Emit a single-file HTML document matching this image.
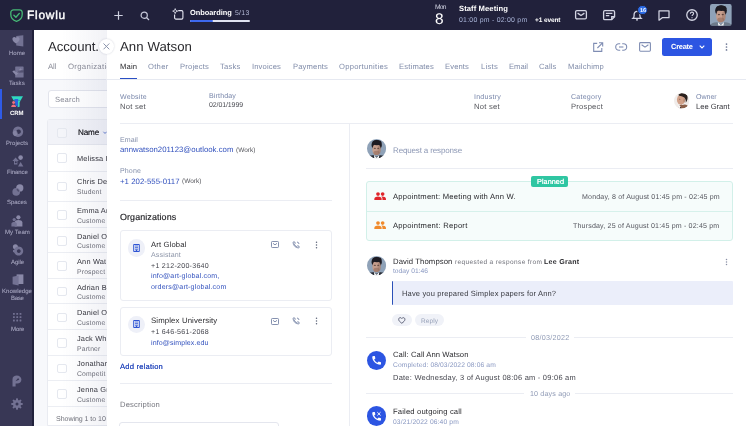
<!DOCTYPE html>
<html><head><meta charset="utf-8"><title>Flowlu CRM</title>
<style>
html,body{margin:0;padding:0;}
body{width:746px;height:426px;overflow:hidden;position:relative;background:#fff;font-family:"Liberation Sans",sans-serif;}
.t{position:absolute;white-space:nowrap;will-change:transform;text-rendering:geometricPrecision;}
.b{position:absolute;box-sizing:border-box;}
svg{position:absolute;overflow:visible;}
</style></head><body>
<div class="b" style="left:34.00px;top:29.00px;width:712.00px;height:397.00px;background:#f7f8fb;"></div>
<div class="b" style="left:34.00px;top:29.00px;width:80.00px;height:50.00px;background:#fff;"></div>
<div class="b" style="left:34.00px;top:78.50px;width:80.00px;height:1.00px;background:#e6e8f0;"></div>
<div class="t" style="left:48.20px;top:39px;font-size:13.21px;line-height:15px;color:#2a2a2e;letter-spacing:-0.048px;">Account.</div>
<div class="t" style="left:48.20px;top:62px;font-size:7.81px;line-height:9px;color:#8b8d99;letter-spacing:-0.161px;">All</div>
<div class="t" style="left:68.30px;top:62px;font-size:7.81px;line-height:9px;color:#8b8d99;letter-spacing:0.292px;">Organizations</div>
<div class="b" style="left:48.00px;top:90.40px;width:80.00px;height:17.20px;background:#fff;border:1px solid #e2e4ec;border-radius:3px;"></div>
<div class="t" style="left:55.00px;top:95px;font-size:7.63px;line-height:9px;color:#8b8d99;letter-spacing:0.139px;">Search</div>
<div class="b" style="left:47.00px;top:119.40px;width:80.00px;height:306.60px;background:#fff;border-radius:3px 0 0 0;border:1px solid #e9ebf1;"></div>
<div class="b" style="left:48.00px;top:120.10px;width:80.00px;height:25.00px;background:#f2f3f8;border-bottom:1px solid #e6e8ef;"></div>
<div class="b" style="left:57.20px;top:128.00px;width:9.60px;height:9.60px;background:#f4f5f9;border:1px solid #e5e8ef;border-radius:2px;"></div>
<div class="t" style="left:77.80px;top:128px;font-size:8.18px;line-height:9px;color:#2d2d33;letter-spacing:-0.208px;text-shadow:0 0 .2px #555;">Name</div>
<svg style="left:103.4px;top:131.2px" width="4" height="3.4" viewBox="0 0 5 4"><path d="M0.5 0.8 L2.5 3 L4.5 0.8" fill="none" stroke="#5873c9" stroke-width="1.1"/></svg>
<div class="b" style="left:48.00px;top:170.50px;width:80.00px;height:1.00px;background:#eceef3;"></div>
<div class="b" style="left:48.00px;top:201.30px;width:80.00px;height:1.00px;background:#eceef3;"></div>
<div class="b" style="left:48.00px;top:226.50px;width:80.00px;height:1.00px;background:#eceef3;"></div>
<div class="b" style="left:48.00px;top:252.20px;width:80.00px;height:1.00px;background:#eceef3;"></div>
<div class="b" style="left:48.00px;top:277.80px;width:80.00px;height:1.00px;background:#eceef3;"></div>
<div class="b" style="left:48.00px;top:303.30px;width:80.00px;height:1.00px;background:#eceef3;"></div>
<div class="b" style="left:48.00px;top:328.50px;width:80.00px;height:1.00px;background:#eceef3;"></div>
<div class="b" style="left:48.00px;top:354.50px;width:80.00px;height:1.00px;background:#eceef3;"></div>
<div class="b" style="left:48.00px;top:380.00px;width:80.00px;height:1.00px;background:#eceef3;"></div>
<div class="b" style="left:48.00px;top:405.50px;width:80.00px;height:1.00px;background:#eceef3;"></div>
<div class="t" style="left:76.80px;top:154px;font-size:7.35px;line-height:9px;color:#33333a;letter-spacing:.2px;">Melissa I</div>
<div class="b" style="left:57.20px;top:153.40px;width:9.60px;height:9.60px;background:#fff;border:1px solid #e5e8ef;border-radius:2px;"></div>
<div class="t" style="left:76.80px;top:177px;font-size:7.35px;line-height:9px;color:#33333a;letter-spacing:.2px;">Chris De</div>
<div class="t" style="left:76.80px;top:189px;font-size:6.79px;line-height:7px;color:#6f7079;letter-spacing:.18px;">Student</div>
<div class="b" style="left:57.20px;top:181.65px;width:9.60px;height:9.60px;background:#fff;border:1px solid #e5e8ef;border-radius:2px;"></div>
<div class="t" style="left:76.80px;top:206px;font-size:7.35px;line-height:9px;color:#33333a;letter-spacing:.2px;">Emma Ar</div>
<div class="t" style="left:76.80px;top:218px;font-size:6.79px;line-height:7px;color:#6f7079;letter-spacing:.18px;">Custome</div>
<div class="b" style="left:57.20px;top:210.30px;width:9.60px;height:9.60px;background:#fff;border:1px solid #e5e8ef;border-radius:2px;"></div>
<div class="t" style="left:76.80px;top:232px;font-size:7.35px;line-height:9px;color:#33333a;letter-spacing:.2px;">Daniel O</div>
<div class="t" style="left:76.80px;top:243px;font-size:6.79px;line-height:7px;color:#6f7079;letter-spacing:.18px;">Custome</div>
<div class="b" style="left:57.20px;top:235.95px;width:9.60px;height:9.60px;background:#fff;border:1px solid #e5e8ef;border-radius:2px;"></div>
<div class="t" style="left:76.80px;top:257px;font-size:7.35px;line-height:9px;color:#33333a;letter-spacing:.2px;">Ann Wat</div>
<div class="t" style="left:76.80px;top:269px;font-size:6.79px;line-height:7px;color:#6f7079;letter-spacing:.18px;">Prospect</div>
<div class="b" style="left:57.20px;top:261.45px;width:9.60px;height:9.60px;background:#fff;border:1px solid #e5e8ef;border-radius:2px;"></div>
<div class="t" style="left:76.80px;top:283px;font-size:7.35px;line-height:9px;color:#33333a;letter-spacing:.2px;">Adrian B</div>
<div class="t" style="left:76.80px;top:294px;font-size:6.79px;line-height:7px;color:#6f7079;letter-spacing:.18px;">Custome</div>
<div class="b" style="left:57.20px;top:286.90px;width:9.60px;height:9.60px;background:#fff;border:1px solid #e5e8ef;border-radius:2px;"></div>
<div class="t" style="left:76.80px;top:308px;font-size:7.35px;line-height:9px;color:#33333a;letter-spacing:.2px;">Daniel O</div>
<div class="t" style="left:76.80px;top:320px;font-size:6.79px;line-height:7px;color:#6f7079;letter-spacing:.18px;">Custome</div>
<div class="b" style="left:57.20px;top:312.65px;width:9.60px;height:9.60px;background:#fff;border:1px solid #e5e8ef;border-radius:2px;"></div>
<div class="t" style="left:76.80px;top:334px;font-size:7.35px;line-height:9px;color:#33333a;letter-spacing:.2px;">Jack Wh</div>
<div class="t" style="left:76.80px;top:346px;font-size:6.79px;line-height:7px;color:#6f7079;letter-spacing:.18px;">Partner</div>
<div class="b" style="left:57.20px;top:338.10px;width:9.60px;height:9.60px;background:#fff;border:1px solid #e5e8ef;border-radius:2px;"></div>
<div class="t" style="left:76.80px;top:359px;font-size:7.35px;line-height:9px;color:#33333a;letter-spacing:.2px;">Jonathan</div>
<div class="t" style="left:76.80px;top:371px;font-size:6.79px;line-height:7px;color:#6f7079;letter-spacing:.18px;">Competit</div>
<div class="b" style="left:57.20px;top:363.70px;width:9.60px;height:9.60px;background:#fff;border:1px solid #e5e8ef;border-radius:2px;"></div>
<div class="t" style="left:76.80px;top:385px;font-size:7.35px;line-height:9px;color:#33333a;letter-spacing:.2px;">Jenna Gr</div>
<div class="t" style="left:76.80px;top:397px;font-size:6.79px;line-height:7px;color:#6f7079;letter-spacing:.18px;">Custome</div>
<div class="b" style="left:57.20px;top:389.10px;width:9.60px;height:9.60px;background:#fff;border:1px solid #e5e8ef;border-radius:2px;"></div>
<div class="t" style="left:56.00px;top:416px;font-size:7.07px;line-height:7px;color:#6f7079;letter-spacing:-0.059px;">Showing 1 to 10</div>
<div class="b" style="left:62.00px;top:29.00px;width:45.00px;height:397.00px;background:linear-gradient(to right,rgba(50,60,120,0),rgba(50,60,120,0.03) 50%,rgba(50,60,120,0.065));"></div>
<div class="b" style="left:106.70px;top:29.00px;width:640.00px;height:397.00px;background:#fff;"></div>
<div class="b" style="left:99.20px;top:38.80px;width:15.00px;height:15.00px;background:#fff;border-radius:50%;box-shadow:0 0 2px rgba(40,50,90,.22);"></div>
<svg style="left:103.3px;top:43px" width="6.8" height="6.8" viewBox="0 0 6.8 6.8"><path d="M0.5 0.5 L6.3 6.3 M6.3 0.5 L0.5 6.3" stroke="#8b94ab" stroke-width="1" fill="none"/></svg>
<div class="t" style="left:119.70px;top:39px;font-size:13.21px;line-height:15px;color:#2a2a2e;letter-spacing:0.055px;">Ann Watson</div>
<div class="t" style="left:119.70px;top:62px;font-size:7.63px;line-height:9px;color:#2a2a2e;letter-spacing:0.168px;">Main</div>
<div class="t" style="left:147.80px;top:62px;font-size:7.63px;line-height:9px;color:#808ca9;letter-spacing:0.285px;">Other</div>
<div class="t" style="left:179.60px;top:62px;font-size:7.63px;line-height:9px;color:#808ca9;letter-spacing:0.181px;">Projects</div>
<div class="t" style="left:220.20px;top:62px;font-size:7.63px;line-height:9px;color:#808ca9;letter-spacing:0.201px;">Tasks</div>
<div class="t" style="left:252.00px;top:62px;font-size:7.63px;line-height:9px;color:#808ca9;letter-spacing:0.128px;">Invoices</div>
<div class="t" style="left:292.60px;top:62px;font-size:7.63px;line-height:9px;color:#808ca9;letter-spacing:0.136px;">Payments</div>
<div class="t" style="left:338.80px;top:62px;font-size:7.63px;line-height:9px;color:#808ca9;letter-spacing:0.280px;">Opportunities</div>
<div class="t" style="left:399.00px;top:62px;font-size:7.63px;line-height:9px;color:#808ca9;letter-spacing:0.169px;">Estimates</div>
<div class="t" style="left:445.00px;top:62px;font-size:7.63px;line-height:9px;color:#808ca9;letter-spacing:0.114px;">Events</div>
<div class="t" style="left:480.70px;top:62px;font-size:7.63px;line-height:9px;color:#808ca9;letter-spacing:0.264px;">Lists</div>
<div class="t" style="left:508.70px;top:62px;font-size:7.63px;line-height:9px;color:#808ca9;letter-spacing:-0.014px;">Email</div>
<div class="t" style="left:539.00px;top:62px;font-size:7.63px;line-height:9px;color:#808ca9;letter-spacing:0.110px;">Calls</div>
<div class="t" style="left:568.00px;top:62px;font-size:7.63px;line-height:9px;color:#808ca9;letter-spacing:0.186px;">Mailchimp</div>
<div class="b" style="left:106.40px;top:78.60px;width:640.00px;height:1.00px;background:#e6e9f1;"></div>
<div class="b" style="left:119.70px;top:77.60px;width:17.20px;height:1.60px;background:#2a4fc4;"></div>
<svg style="left:592.8px;top:42.2px" width="10.4" height="10" viewBox="0 0 10.4 10" fill="none" stroke="#7f8db3" stroke-width="1.1"><path d="M4.2 1.4 H0.7 V9.4 H8.8 V6"/><path d="M6 0.7 H9.7 V4.4 M9.6 0.8 L4.4 6"/></svg>
<svg style="left:614.8px;top:43.2px" width="12.4" height="8" viewBox="0 0 12.4 8" fill="none" stroke="#7f8db3" stroke-width="1.1"><path d="M5.2 0.8 H3.9 A3.2 3.2 0 0 0 3.9 7.2 H5.2"/><path d="M7.2 0.8 H8.5 A3.2 3.2 0 0 1 8.5 7.2 H7.2"/><path d="M4 4 H8.4"/></svg>
<svg style="left:639px;top:42.3px" width="12" height="9.8" viewBox="0 0 12 9.8" fill="none" stroke="#7f8db3" stroke-width="1.1"><rect x="0.6" y="0.6" width="10.8" height="8.6" rx="0.9"/><path d="M2.6 2.8 L6 5.2 L9.4 2.8"/></svg>
<div class="b" style="left:662.10px;top:37.80px;width:50.00px;height:17.90px;background:#2c55e2;border-radius:2.5px;"></div>
<div class="t" style="left:671.00px;top:42px;font-size:7.44px;line-height:9px;color:#fff;letter-spacing:-0.243px;font-weight:bold;">Create</div>
<svg style="left:698.6px;top:45.4px" width="6" height="4" viewBox="0 0 6 4"><path d="M0.7 0.7 L3 3 L5.3 0.7" fill="none" stroke="#fff" stroke-width="1.1"/></svg>
<svg style="left:725.10px;top:42.00px" width="3" height="10" viewBox="-1.5 -5 3 10" fill="#6f7a96"><circle cx="0" cy="-2.90" r="0.85"/><circle cx="0" cy="0" r="0.85"/><circle cx="0" cy="2.90" r="0.85"/></svg>
<div class="t" style="left:119.70px;top:94px;font-size:7.07px;line-height:7px;color:#7886aa;letter-spacing:0.228px;">Website</div>
<div class="t" style="left:119.70px;top:102px;font-size:7.63px;line-height:9px;color:#55565c;letter-spacing:0.263px;">Not set</div>
<div class="t" style="left:208.60px;top:93px;font-size:7.07px;line-height:7px;color:#7886aa;letter-spacing:0.134px;">Birthday</div>
<div class="t" style="left:208.60px;top:102px;font-size:6.98px;line-height:7px;color:#4c4d54;letter-spacing:-0.091px;">02/01/1999</div>
<div class="t" style="left:473.50px;top:94px;font-size:7.07px;line-height:7px;color:#7886aa;letter-spacing:0.232px;">Industry</div>
<div class="t" style="left:473.50px;top:102px;font-size:7.63px;line-height:9px;color:#55565c;letter-spacing:0.263px;">Not set</div>
<div class="t" style="left:571.00px;top:94px;font-size:7.07px;line-height:7px;color:#7886aa;letter-spacing:0.227px;">Category</div>
<div class="t" style="left:571.00px;top:102px;font-size:7.63px;line-height:9px;color:#55565c;letter-spacing:0.238px;">Prospect</div>
<svg style="left:674.40px;top:93.30px" width="15.40" height="15.40" viewBox="0 0 20 20"><defs><clipPath id="av1"><circle cx="10" cy="10" r="10"/></clipPath></defs><g clip-path="url(#av1)"><rect width="20" height="20" fill="#f0ecea"/><ellipse cx="9" cy="8.8" rx="5.2" ry="6.6" fill="#d1a189"/><path d="M5.6 2.6 C7.6 -0.6 16 -0.6 17.4 4 C18.2 7.4 17 11 15.2 12.6 C15.6 9 14.6 6.2 11.6 4.8 C9.4 4 7.2 4 5.6 2.6 Z" fill="#2b211d"/><ellipse cx="13.3" cy="9.8" rx="1.2" ry="2.8" fill="#a87a64" opacity=".6"/><ellipse cx="7.4" cy="8" rx="1" ry=".5" fill="#3a2824" opacity=".7"/><path d="M4.6 20 C5.6 16.2 8.8 14.8 11 15.6 C14 13.8 19 15.6 20 20 Z" fill="#8a5f49"/><path d="M6 15.2 L8.8 18 L7.6 20 H4.6 Z" fill="#fafafa"/><path d="M8.2 17.4 L9.6 20 H7.4 Z" fill="#2a2326"/></g></svg>
<div class="t" style="left:695.80px;top:94px;font-size:7.07px;line-height:7px;color:#7886aa;letter-spacing:-0.044px;">Owner</div>
<div class="t" style="left:695.80px;top:102px;font-size:7.63px;line-height:9px;color:#3a3a40;letter-spacing:-0.046px;">Lee Grant</div>
<div class="b" style="left:119.70px;top:123.00px;width:613.50px;height:1.00px;background:#ebedf3;"></div>
<div class="b" style="left:349.00px;top:123.50px;width:1.00px;height:303.00px;background:#ebedf3;"></div>
<div class="t" style="left:119.90px;top:137px;font-size:7.07px;line-height:7px;color:#8590ab;letter-spacing:0.065px;">Email</div>
<div class="t" style="left:119.90px;top:145px;font-size:7.81px;line-height:9px;color:#3352be;letter-spacing:0.014px;">annwatson201123@outlook.com</div>
<div class="t" style="left:235.60px;top:147px;font-size:6.51px;line-height:7px;color:#55565c;letter-spacing:0.016px;">(Work)</div>
<div class="t" style="left:119.90px;top:168px;font-size:7.07px;line-height:7px;color:#8590ab;letter-spacing:0.112px;">Phone</div>
<div class="t" style="left:119.90px;top:177px;font-size:7.81px;line-height:9px;color:#3352be;letter-spacing:0.037px;">+1 202-555-0117</div>
<div class="t" style="left:181.80px;top:178px;font-size:6.51px;line-height:7px;color:#55565c;letter-spacing:0.016px;">(Work)</div>
<div class="b" style="left:119.70px;top:199.80px;width:211.90px;height:1.00px;background:#ebedf3;"></div>
<div class="t" style="left:119.90px;top:212px;font-size:8.93px;line-height:10px;color:#222226;letter-spacing:0.093px;-webkit-text-stroke:.15px #222226;">Organizations</div>
<div class="b" style="left:119.70px;top:229.60px;width:211.90px;height:71.00px;border:1px solid #ebedf3;border-radius:3px;background:#fff;"></div>
<div class="b" style="left:128.30px;top:239.40px;width:17.20px;height:17.20px;background:#eef0f8;border-radius:50%;"></div>
<svg style="left:133.40px;top:244.00px" width="7" height="8" viewBox="0 0 7 8"><path d="M0.7 0.5 H6.3 V7.5 H0.7 Z" fill="none" stroke="#2f55d4" stroke-width="1"/><path d="M2 2 H5 M2 3.6 H5 M2 5.2 H5" stroke="#2f55d4" stroke-width="0.8"/><rect x="2.7" y="5.6" width="1.6" height="1.9" fill="#2f55d4"/></svg>
<div class="t" style="left:150.70px;top:240px;font-size:7.63px;line-height:9px;color:#2a2a2e;letter-spacing:0.159px;">Art Global</div>
<div class="t" style="left:150.70px;top:252px;font-size:7.07px;line-height:7px;color:#8d95a8;letter-spacing:0.147px;">Assistant</div>
<div class="t" style="left:150.70px;top:263px;font-size:7.07px;line-height:7px;color:#44454d;letter-spacing:0.264px;">+1 212-200-3640</div>
<div class="t" style="left:150.70px;top:273px;font-size:7.07px;line-height:7px;color:#3352be;letter-spacing:0.159px;">info@art-global.com,</div>
<div class="t" style="left:150.70px;top:284px;font-size:7.07px;line-height:7px;color:#3352be;letter-spacing:0.167px;">orders@art-global.com</div>
<svg style="left:271px;top:241.10px" width="8" height="7" viewBox="0 0 8 7" fill="none" stroke="#6f7da0" stroke-width="0.85"><rect x="0.5" y="0.5" width="7" height="6" rx="0.8"/><path d="M2 2.3 L4 3.9 L6 2.3"/></svg>
<svg style="left:292.3px;top:240.60px" width="8" height="8" viewBox="0 0 8 8" fill="none" stroke="#6f7da0" stroke-width="0.85"><path d="M1 1.2 C1 1 2.6 0.6 2.8 1 L3.2 2.6 L2.4 3.3 C2.8 4.4 3.6 5.2 4.7 5.6 L5.4 4.8 L7 5.2 C7.4 5.4 7 7 6.8 7 C3.6 7 1 4.4 1 1.2 Z"/><path d="M5 1 A2.2 2.2 0 0 1 7 3" /></svg>
<svg style="left:315.10px;top:239.60px" width="3" height="10" viewBox="-1.5 -5 3 10" fill="#5c6478"><circle cx="0" cy="-2.70" r="0.75"/><circle cx="0" cy="0" r="0.75"/><circle cx="0" cy="2.70" r="0.75"/></svg>
<div class="b" style="left:119.70px;top:306.50px;width:211.90px;height:49.60px;border:1px solid #ebedf3;border-radius:3px;background:#fff;"></div>
<div class="b" style="left:128.30px;top:315.80px;width:17.20px;height:17.20px;background:#eef0f8;border-radius:50%;"></div>
<svg style="left:133.40px;top:320.40px" width="7" height="8" viewBox="0 0 7 8"><path d="M0.7 0.5 H6.3 V7.5 H0.7 Z" fill="none" stroke="#2f55d4" stroke-width="1"/><path d="M2 2 H5 M2 3.6 H5 M2 5.2 H5" stroke="#2f55d4" stroke-width="0.8"/><rect x="2.7" y="5.6" width="1.6" height="1.9" fill="#2f55d4"/></svg>
<div class="t" style="left:150.70px;top:316px;font-size:7.81px;line-height:9px;color:#2a2a2e;letter-spacing:0.125px;">Simplex University</div>
<div class="t" style="left:150.70px;top:329px;font-size:7.07px;line-height:7px;color:#44454d;letter-spacing:0.264px;">+1 646-561-2068</div>
<div class="t" style="left:150.70px;top:340px;font-size:7.07px;line-height:7px;color:#3352be;letter-spacing:0.076px;">info@simplex.edu</div>
<svg style="left:271px;top:317.70px" width="8" height="7" viewBox="0 0 8 7" fill="none" stroke="#6f7da0" stroke-width="0.85"><rect x="0.5" y="0.5" width="7" height="6" rx="0.8"/><path d="M2 2.3 L4 3.9 L6 2.3"/></svg>
<svg style="left:292.3px;top:317.20px" width="8" height="8" viewBox="0 0 8 8" fill="none" stroke="#6f7da0" stroke-width="0.85"><path d="M1 1.2 C1 1 2.6 0.6 2.8 1 L3.2 2.6 L2.4 3.3 C2.8 4.4 3.6 5.2 4.7 5.6 L5.4 4.8 L7 5.2 C7.4 5.4 7 7 6.8 7 C3.6 7 1 4.4 1 1.2 Z"/><path d="M5 1 A2.2 2.2 0 0 1 7 3" /></svg>
<svg style="left:315.10px;top:316.20px" width="3" height="10" viewBox="-1.5 -5 3 10" fill="#5c6478"><circle cx="0" cy="-2.70" r="0.75"/><circle cx="0" cy="0" r="0.75"/><circle cx="0" cy="2.70" r="0.75"/></svg>
<div class="t" style="left:119.90px;top:362px;font-size:7.63px;line-height:9px;color:#3352be;letter-spacing:0.192px;text-shadow:0 0 .3px #2a4fc4;">Add relation</div>
<div class="b" style="left:119.70px;top:382.80px;width:211.90px;height:1.00px;background:#ebedf3;"></div>
<div class="t" style="left:119.90px;top:400px;font-size:7.63px;line-height:9px;color:#75767e;letter-spacing:0.169px;">Description</div>
<div class="b" style="left:119.00px;top:422.00px;width:159.60px;height:10.00px;border:1px solid #e4e6ee;border-radius:3px;"></div>
<svg style="left:366.70px;top:138.90px" width="19.20" height="19.20" viewBox="0 0 20 20"><defs><clipPath id="av2"><circle cx="10" cy="10" r="10"/></clipPath></defs><g clip-path="url(#av2)"><rect width="20" height="20" fill="#8fa2b8"/><ellipse cx="10.1" cy="6.3" rx="5.4" ry="5.2" fill="#1d1b22"/><ellipse cx="9.9" cy="11" rx="4.3" ry="6" fill="#c59d8c"/><ellipse cx="10.4" cy="3.9" rx="4.7" ry="2.5" fill="#1d1b22"/><ellipse cx="12.7" cy="11" rx="1.7" ry="4.4" fill="#8d6657" opacity=".4"/><ellipse cx="9.9" cy="14.5" rx="3.2" ry="2.2" fill="#8d6657" opacity=".55"/><ellipse cx="8.2" cy="9.7" rx="1.1" ry=".55" fill="#3a2824" opacity=".8"/><ellipse cx="11.7" cy="9.7" rx="1.1" ry=".55" fill="#3a2824" opacity=".8"/><path d="M0 20 C1 17.4 5 16.4 7.6 17 L10 18.4 L12.4 17 C15 16.4 19 17.4 20 20 Z" fill="#2a2c34"/><path d="M7.2 16.5 L10 19.6 L12.8 16.5 L12.4 20 H7.6 Z" fill="#eef0f2"/></g></svg>
<div class="t" style="left:392.60px;top:146px;font-size:8.00px;line-height:9px;color:#8c97b4;letter-spacing:-0.144px;">Request a response</div>
<div class="b" style="left:366.40px;top:168.00px;width:366.40px;height:1.00px;background:#ebedf3;"></div>
<div class="b" style="left:366.40px;top:181.00px;width:366.60px;height:59.60px;background:#f6fcfb;border:1px solid #d2f0e9;border-radius:3px;"></div>
<div class="b" style="left:367.40px;top:210.60px;width:364.60px;height:1.00px;background:#d6f1eb;"></div>
<div class="b" style="left:531.40px;top:176.00px;width:37.00px;height:10.80px;background:#2fc6a2;border-radius:2px;"></div>
<div class="t" style="left:536.50px;top:177px;font-size:7.25px;line-height:9px;color:#fff;letter-spacing:0.054px;text-shadow:0 0 .3px #fff;">Planned</div>
<svg style="left:374.40px;top:192.00px" width="12.2" height="8.4" viewBox="0 0 11 8" preserveAspectRatio="none" fill="#e0252b"><circle cx="3.6" cy="2" r="1.7"/><circle cx="7.8" cy="2" r="1.7"/><path d="M0.3 7.6 V6.4 C0.3 5 2.4 4.3 3.6 4.3 C4.8 4.3 6.9 5 6.9 6.4 V7.6 Z"/><path d="M7.6 7.6 V6.4 C7.6 5.5 7.2 4.9 6.6 4.5 C8 4.1 10.8 4.8 10.8 6.4 V7.6 Z"/></svg>
<svg style="left:374.40px;top:221.40px" width="12.2" height="8.4" viewBox="0 0 11 8" preserveAspectRatio="none" fill="#f08a2c"><circle cx="3.6" cy="2" r="1.7"/><circle cx="7.8" cy="2" r="1.7"/><path d="M0.3 7.6 V6.4 C0.3 5 2.4 4.3 3.6 4.3 C4.8 4.3 6.9 5 6.9 6.4 V7.6 Z"/><path d="M7.6 7.6 V6.4 C7.6 5.5 7.2 4.9 6.6 4.5 C8 4.1 10.8 4.8 10.8 6.4 V7.6 Z"/></svg>
<div class="t" style="left:392.60px;top:192px;font-size:7.63px;line-height:9px;color:#2a2a2e;letter-spacing:0.208px;">Appointment: Meeting with Ann W.</div>
<div class="t" style="left:581.80px;top:194px;font-size:7.07px;line-height:7px;color:#55565e;letter-spacing:0.177px;">Monday, 8 of August 01:45 pm - 02:45 pm</div>
<div class="t" style="left:392.60px;top:221px;font-size:7.63px;line-height:9px;color:#2a2a2e;letter-spacing:0.240px;">Appointment: Report</div>
<div class="t" style="left:573.30px;top:223px;font-size:7.07px;line-height:7px;color:#55565e;letter-spacing:0.170px;">Thursday, 25 of August 01:45 pm - 02:45 pm</div>
<svg style="left:366.70px;top:255.60px" width="19.20" height="19.20" viewBox="0 0 20 20"><defs><clipPath id="av3"><circle cx="10" cy="10" r="10"/></clipPath></defs><g clip-path="url(#av3)"><rect width="20" height="20" fill="#8fa2b8"/><ellipse cx="10.1" cy="6.3" rx="5.4" ry="5.2" fill="#1d1b22"/><ellipse cx="9.9" cy="11" rx="4.3" ry="6" fill="#c59d8c"/><ellipse cx="10.4" cy="3.9" rx="4.7" ry="2.5" fill="#1d1b22"/><ellipse cx="12.7" cy="11" rx="1.7" ry="4.4" fill="#8d6657" opacity=".4"/><ellipse cx="9.9" cy="14.5" rx="3.2" ry="2.2" fill="#8d6657" opacity=".55"/><ellipse cx="8.2" cy="9.7" rx="1.1" ry=".55" fill="#3a2824" opacity=".8"/><ellipse cx="11.7" cy="9.7" rx="1.1" ry=".55" fill="#3a2824" opacity=".8"/><path d="M0 20 C1 17.4 5 16.4 7.6 17 L10 18.4 L12.4 17 C15 16.4 19 17.4 20 20 Z" fill="#2a2c34"/><path d="M7.2 16.5 L10 19.6 L12.8 16.5 L12.4 20 H7.6 Z" fill="#eef0f2"/></g></svg>
<div class="t" style="left:392.60px;top:257px;font-size:7.72px;line-height:9px;color:#2a2a2e;letter-spacing:0.092px;">David Thompson</div>
<div class="t" style="left:454.60px;top:259px;font-size:6.51px;line-height:7px;color:#6f7079;letter-spacing:0.388px;">requested a response from</div>
<div class="t" style="left:544.40px;top:259px;font-size:7.07px;line-height:7px;color:#2a2a2e;letter-spacing:0.278px;font-weight:bold;">Lee Grant</div>
<div class="t" style="left:392.60px;top:268px;font-size:6.70px;line-height:7px;color:#8796c0;letter-spacing:0.000px;">today 01:46</div>
<svg style="left:724.50px;top:257.20px" width="3" height="10" viewBox="-1.5 -5 3 10" fill="#8a90a6"><circle cx="0" cy="-2.60" r="0.75"/><circle cx="0" cy="0" r="0.75"/><circle cx="0" cy="2.60" r="0.75"/></svg>
<div class="b" style="left:391.60px;top:280.50px;width:341.40px;height:24.50px;background:#ebeefa;border-left:1.6px solid #2b50b8;border-radius:1px;"></div>
<div class="t" style="left:401.80px;top:289px;font-size:7.53px;line-height:9px;color:#3a3b42;letter-spacing:0.153px;">Have you prepared Simplex papers for Ann?</div>
<div class="b" style="left:392.00px;top:313.60px;width:20.20px;height:12.60px;background:#f0f2f8;border-radius:6.3px;"></div>
<svg style="left:398.3px;top:316.7px" width="7.6" height="6.9" viewBox="0 0 7 6.4"><path d="M3.5 5.8 C1.8 4.6 0.6 3.5 0.6 2.2 C0.6 1.2 1.3 0.6 2.1 0.6 C2.7 0.6 3.2 0.9 3.5 1.4 C3.8 0.9 4.3 0.6 4.9 0.6 C5.7 0.6 6.4 1.2 6.4 2.2 C6.4 3.5 5.2 4.6 3.5 5.8 Z" fill="none" stroke="#4b4f66" stroke-width="0.8"/></svg>
<div class="b" style="left:415.20px;top:313.60px;width:28.80px;height:12.60px;background:#f0f2f8;border-radius:6.3px;"></div>
<div class="t" style="left:421.10px;top:318px;font-size:6.51px;line-height:7px;color:#97a1b8;letter-spacing:0.071px;">Reply</div>
<div class="b" style="left:366.40px;top:336.70px;width:366.40px;height:1.00px;background:#ebedf3;"></div>
<div class="b" style="left:525.50px;top:333.20px;width:48.40px;height:8.00px;background:#fff;"></div>
<div class="t" style="left:530.80px;top:334px;font-size:7.16px;line-height:8px;color:#8f9ab5;letter-spacing:0.256px;">08/03/2022</div>
<div class="b" style="left:366.90px;top:350.60px;width:19.20px;height:19.20px;background:#2c55e2;border-radius:50%;"></div>
<svg style="left:371.00px;top:354.70px" width="11" height="11" viewBox="0 0 9 9"><path d="M1 1.3 C1 0.9 2.9 0.5 3.1 0.9 L3.6 2.8 L2.6 3.6 C3.1 4.9 4.1 5.9 5.4 6.4 L6.2 5.4 L8.1 5.9 C8.5 6.1 8.1 8 7.7 8 C4 8 1 5 1 1.3 Z" fill="#fff"/></svg>
<div class="t" style="left:392.60px;top:350px;font-size:7.63px;line-height:9px;color:#2a2a2e;letter-spacing:0.097px;">Call: Call Ann Watson</div>
<div class="t" style="left:392.60px;top:362px;font-size:6.70px;line-height:7px;color:#8796c0;letter-spacing:0.120px;">Completed: 08/03/2022 08:06 am</div>
<div class="t" style="left:392.60px;top:373px;font-size:7.44px;line-height:9px;color:#44454d;letter-spacing:0.260px;">Date: Wednesday, 3 of August 08:06 am - 09:06 am</div>
<div class="b" style="left:366.40px;top:393.00px;width:366.40px;height:1.00px;background:#ebedf3;"></div>
<div class="b" style="left:524.45px;top:389.50px;width:50.50px;height:8.00px;background:#fff;"></div>
<div class="t" style="left:529.75px;top:390px;font-size:7.16px;line-height:8px;color:#8f9ab5;letter-spacing:0.135px;">10 days ago</div>
<div class="b" style="left:366.90px;top:406.40px;width:19.20px;height:19.20px;background:#2c55e2;border-radius:50%;"></div>
<svg style="left:371.00px;top:410.50px" width="11" height="11" viewBox="0 0 9 9"><path d="M1 1.3 C1 0.9 2.9 0.5 3.1 0.9 L3.6 2.8 L2.6 3.6 C3.1 4.9 4.1 5.9 5.4 6.4 L6.2 5.4 L8.1 5.9 C8.5 6.1 8.1 8 7.7 8 C4 8 1 5 1 1.3 Z" fill="#fff"/><path d="M5.2 1 L7.8 3.6 M7.8 1 L5.2 3.6" stroke="#fff" stroke-width="0.8" fill="none"/></svg>
<div class="t" style="left:392.60px;top:407px;font-size:7.63px;line-height:9px;color:#2a2a2e;letter-spacing:0.164px;">Failed outgoing call</div>
<div class="t" style="left:392.60px;top:419px;font-size:6.70px;line-height:7px;color:#8796c0;letter-spacing:0.142px;">03/21/2022 06:40 pm</div>
<div class="b" style="left:0.00px;top:29.00px;width:34.20px;height:397.00px;background:#21213b;"></div>
<div class="b" style="left:0.00px;top:29.00px;width:32.40px;height:397.00px;background:#383755;"></div>
<div class="b" style="left:0.00px;top:88.60px;width:2.10px;height:30.40px;background:#2f5be8;"></div>
<div class="t" style="left:9.20px;top:51px;font-size:6.04px;line-height:6px;color:#9190ab;letter-spacing:-0.031px;text-shadow:0 0 .4px #9190ab;">Home</div>
<div class="t" style="left:9.30px;top:81px;font-size:6.04px;line-height:6px;color:#9190ab;letter-spacing:0.070px;text-shadow:0 0 .4px #9190ab;">Tasks</div>
<div class="t" style="left:10.40px;top:111px;font-size:6.04px;line-height:6px;color:#fff;letter-spacing:-0.056px;font-weight:bold;">CRM</div>
<div class="t" style="left:6.20px;top:141px;font-size:6.04px;line-height:6px;color:#9190ab;letter-spacing:0.020px;text-shadow:0 0 .4px #9190ab;">Projects</div>
<div class="t" style="left:6.80px;top:170px;font-size:6.04px;line-height:6px;color:#9190ab;letter-spacing:-0.101px;text-shadow:0 0 .4px #9190ab;">Finance</div>
<div class="t" style="left:7.30px;top:200px;font-size:6.04px;line-height:6px;color:#9190ab;letter-spacing:-0.061px;text-shadow:0 0 .4px #9190ab;">Spaces</div>
<div class="t" style="left:4.70px;top:230px;font-size:6.04px;line-height:6px;color:#9190ab;letter-spacing:0.084px;text-shadow:0 0 .4px #9190ab;">My Team</div>
<div class="t" style="left:10.70px;top:260px;font-size:6.04px;line-height:6px;color:#9190ab;letter-spacing:-0.089px;text-shadow:0 0 .4px #9190ab;">Agile</div>
<div class="t" style="left:2.20px;top:289px;font-size:6.04px;line-height:6px;color:#9190ab;letter-spacing:0.010px;text-shadow:0 0 .4px #9190ab;">Knowledge</div>
<div class="t" style="left:10.95px;top:296px;font-size:6.04px;line-height:6px;color:#9190ab;letter-spacing:-0.320px;text-shadow:0 0 .4px #9190ab;">Base</div>
<div class="t" style="left:10.55px;top:327px;font-size:6.04px;line-height:6px;color:#9190ab;letter-spacing:-0.118px;text-shadow:0 0 .4px #9190ab;">More</div>
<svg style="left:11.60px;top:35.40px" width="12" height="12" viewBox="0 0 12 12" fill="#737293"><path d="M4.2 0.9 L11.3 0.2 V11.4 L4.2 10.6 Z"/><path d="M4 8.6 C2 7 0.4 5.6 0.4 3.9 C0.4 2.7 1.3 1.9 2.4 1.9 C3.1 1.9 3.7 2.3 4 2.9 C4.3 2.3 4.9 1.9 5.6 1.9 C6.7 1.9 7.6 2.7 7.6 3.9 C7.6 5.6 6 7 4 8.6 Z" fill="#8a89a8"/></svg>
<svg style="left:11.60px;top:65.60px" width="12" height="12" viewBox="0 0 12 12" fill="#737293"><rect x="3.2" y="0.4" width="8.4" height="11.2" rx=".6"/><path d="M0.3 5.6 L2.2 4.2 L4.2 6.6 L8.6 2.2 L9.8 3.6 L4.2 9.6 Z" fill="#8a89a8"/><path d="M6 4.6 L11.6 4.2 V6.4 L5 6.8 Z" fill="#383755" opacity=".55"/></svg>
<svg style="left:11.4px;top:95.5px" width="12.2" height="11.4" viewBox="0 0 12.2 11.4"><path d="M0.2 0.2 H12 L9.6 4.6 H2.6 Z" fill="#2fd9c0"/><path d="M6.6 4.6 H9.6 L8.6 6.4 V10.8 L6.6 11.2 Z" fill="#2fd9c0"/><path d="M3.4 3 H7.2 L6.8 10.6 L4.6 10 Z" fill="#2b62e0"/><circle cx="2.6" cy="6.6" r="1.5" fill="#f0707e"/><path d="M0.2 11 C0.2 9.2 1.3 8.4 2.6 8.4 C3.9 8.4 5 9.2 5 11 Z" fill="#f0707e"/></svg>
<svg style="left:11.60px;top:125.50px" width="12" height="11.4" viewBox="0 0 12 11.4" fill="#737293"><path d="M6 0.6 A5.2 5.2 0 1 1 5.99 0.6 Z M6.6 3.4 A2.3 2.3 0 1 0 6.61 3.4 Z" fill-rule="evenodd"/><path d="M0.6 6.4 C1.6 4.4 4.4 4.2 5.4 6 C6 7.4 5 9.6 3 10.2 C1.6 9.6 0.6 8 0.6 6.4 Z" fill="#8a89a8" opacity=".75"/></svg>
<svg style="left:11.60px;top:154.60px" width="12" height="12" viewBox="0 0 12 12" fill="#737293"><circle cx="8.6" cy="2.6" r="2.3" fill="#8a89a8"/><path d="M0.4 6 L3.6 2.6 L6.8 6 L5.4 6 L5.4 9.6 L2 9.6 L2 6 Z"/><path d="M6 11.4 L8.6 7 L11.4 11.4 Z"/><circle cx="3.8" cy="7.2" r="1" fill="#383755"/></svg>
<svg style="left:11.60px;top:184.20px" width="12" height="12" viewBox="0 0 12 12" fill="#737293"><circle cx="7.8" cy="3.9" r="3.6" fill="#8a89a8"/><circle cx="4.2" cy="7.9" r="3.8"/><path d="M5.4 4.6 L7.4 6.8 L6.4 8 L4.4 5.8 Z" fill="#383755" opacity=".6"/></svg>
<svg style="left:11.20px;top:214.80px" width="12" height="12" viewBox="0 0 12 12" fill="#737293"><circle cx="7.4" cy="2.3" r="2.1" fill="#8a89a8"/><path d="M3.6 11.6 V7.6 C3.6 5.8 5.4 5 7.4 5 C9.4 5 11.4 5.8 11.4 7.6 V11.6 Z" fill="#8a89a8"/><circle cx="3.2" cy="4.6" r="1.6"/><path d="M0.4 11.6 V9 C0.4 7.6 1.8 7 3.2 7 C4.6 7 5.8 7.6 5.8 9 V11.6 Z"/></svg>
<svg style="left:11.60px;top:244.20px" width="12" height="12" viewBox="0 0 12 12" fill="#737293"><circle cx="3.4" cy="2.8" r="2.5" fill="#8a89a8"/><path d="M6.6 2.4 A4.6 4.6 0 1 1 6.59 2.4 Z M6.8 5.2 A1.9 1.9 0 1 0 6.81 5.2 Z" fill-rule="evenodd"/><path d="M1 6 H4 V9 L1 8 Z"/></svg>
<svg style="left:11.60px;top:274.20px" width="12" height="12" viewBox="0 0 12 12" fill="#737293"><path d="M4.6 0.4 H11.4 V10 H4.6 Z" fill="#8a89a8"/><path d="M0.6 2.8 L6.6 1.6 V11.6 L0.6 10.2 Z"/></svg>
<svg style="left:13.2px;top:312.6px" width="8.6" height="8.6" viewBox="0 0 8.6 8.6" fill="#737293"><rect x="0" y="0" width="1.8" height="1.8" rx=".3"/><rect x="0" y="3.3" width="1.8" height="1.8" rx=".3"/><rect x="0" y="6.6" width="1.8" height="1.8" rx=".3"/><rect x="3.3" y="0" width="1.8" height="1.8" rx=".3"/><rect x="3.3" y="3.3" width="1.8" height="1.8" rx=".3"/><rect x="3.3" y="6.6" width="1.8" height="1.8" rx=".3"/><rect x="6.6" y="0" width="1.8" height="1.8" rx=".3"/><rect x="6.6" y="3.3" width="1.8" height="1.8" rx=".3"/><rect x="6.6" y="6.6" width="1.8" height="1.8" rx=".3"/></svg>
<svg style="left:11.20px;top:374.50px" width="12" height="12" viewBox="0 0 12 12" fill="#737293"><path d="M1.5 11.5 V4.2 C1.5 1.8 3.4 0.5 5.8 0.5 C8.4 0.5 10.4 2.2 10.4 4.6 C10.4 7 8.6 8.6 6.2 8.6 H4.6 V11.5 Z"/><path d="M4.4 6.2 L7.2 3 L8.2 4.8 Z" fill="#383755"/></svg>
<svg style="left:11.20px;top:397.50px" width="12" height="12" viewBox="0 0 12 12" fill="#737293"><circle cx="6" cy="6" r="4"/><rect x="5" y="0.3" width="2" height="11.4" rx=".6"/><rect x="0.3" y="5" width="11.4" height="2" rx=".6"/><rect x="5" y="0.3" width="2" height="11.4" rx=".6" transform="rotate(45 6 6)"/><rect x="5" y="0.3" width="2" height="11.4" rx=".6" transform="rotate(-45 6 6)"/><circle cx="6" cy="6" r="1.5" fill="#383755"/></svg>
<div class="b" style="left:0.00px;top:0.00px;width:746.00px;height:29.70px;background:#21213b;"></div>
<svg style="left:10px;top:8.6px" width="13" height="13" viewBox="0 0 13 13"><path d="M3.6 0.8 H9.4 C11 0.8 12.2 2 12.2 3.6 V5.6 C12.2 9 9.6 11.4 6.5 12.3 C3.4 11.4 0.8 9 0.8 5.6 V3.6 C0.8 2 2 0.8 3.6 0.8 Z" fill="none" stroke="#46b976" stroke-width="1.3"/><path d="M3.9 6.3 L5.9 8.2 L9.3 4.4" fill="none" stroke="#46b976" stroke-width="1.4" stroke-linecap="round" stroke-linejoin="round"/></svg>
<div class="t" style="left:26.90px;top:8px;font-size:11.90px;line-height:14px;color:#fff;letter-spacing:0.767px;-webkit-text-stroke:.4px #fff;">Flowlu</div>
<svg style="left:114.2px;top:10.5px" width="9" height="9" viewBox="0 0 9 9"><path d="M4.5 0.3 V8.7 M0.3 4.5 H8.7" stroke="#cfd1e0" stroke-width="1.2"/></svg>
<svg style="left:139.5px;top:10.6px" width="10" height="10" viewBox="0 0 10 10" fill="none" stroke="#c6c8d9" stroke-width="1.2"><circle cx="4.2" cy="4.2" r="3.1"/><path d="M6.5 6.5 L9 9"/></svg>
<svg style="left:171.5px;top:8.2px" width="12" height="12" viewBox="0 0 12 12" fill="none" stroke="#e6e7f2" stroke-width="1.1"><path d="M6.2 2.6 H9.6 C10.3 2.6 10.9 3.2 10.9 3.9 V9.8 C10.9 10.5 10.3 11.1 9.6 11.1 H3.9 C3.2 11.1 2.6 10.5 2.6 9.8 V6.4"/><path d="M3.2 0.6 L3.9 2.4 L5.7 3.1 L3.9 3.8 L3.2 5.6 L2.5 3.8 L0.7 3.1 L2.5 2.4 Z" stroke-width=".8"/></svg>
<div class="t" style="left:190.30px;top:8px;font-size:7.44px;line-height:9px;color:#fff;letter-spacing:-0.046px;font-weight:bold;">Onboarding</div>
<div class="t" style="left:235.40px;top:10px;font-size:6.88px;line-height:7px;color:#b3b9d6;letter-spacing:0.301px;">5/13</div>
<div class="b" style="left:190.30px;top:20.40px;width:59.70px;height:1.80px;background:#dfe2f0;border-radius:1px;"></div>
<div class="b" style="left:190.30px;top:20.40px;width:22.30px;height:1.80px;background:#3d68ee;border-radius:1px;"></div>
<div class="t" style="left:434.90px;top:4px;font-size:6.70px;line-height:7px;color:#d5d7e6;letter-spacing:-0.809px;">Mon</div>
<div class="t" style="left:435.20px;top:11px;font-size:15.44px;line-height:17px;color:#fff;letter-spacing:-0.586px;">8</div>
<div class="t" style="left:458.50px;top:4px;font-size:7.63px;line-height:9px;color:#fff;letter-spacing:0.086px;font-weight:bold;">Staff Meeting</div>
<div class="t" style="left:458.50px;top:17px;font-size:6.88px;line-height:7px;color:#a9b4d8;letter-spacing:0.263px;">01:00 pm - 02:00 pm</div>
<div class="t" style="left:534.50px;top:17px;font-size:6.51px;line-height:7px;color:#fff;letter-spacing:-0.105px;font-weight:bold;">+1 event</div>
<svg style="left:575.3px;top:9.8px" width="12" height="9.6" viewBox="0 0 12 9.4" fill="none" stroke="#d2d4e2" stroke-width="1.3"><rect x="0.6" y="0.6" width="10.8" height="8.2" rx="1.3"/><path d="M2.6 3 L6 5.4 L9.4 3"/></svg>
<svg style="left:603px;top:9.5px" width="12.2" height="10.3" viewBox="0 0 12 10" fill="none" stroke="#d2d4e2" stroke-width="1.3"><path d="M1.8 0.6 H10.2 C10.9 0.6 11.4 1.1 11.4 1.8 V6.6 L8.6 9.4 H1.8 C1.1 9.4 0.6 8.9 0.6 8.2 V1.8 C0.6 1.1 1.1 0.6 1.8 0.6 Z"/><path d="M2.8 3.2 H9.2 M2.8 5.4 H6.2 M8.6 9.2 V6.6 H11.2"/></svg>
<svg style="left:631.6px;top:9.8px" width="10" height="11" viewBox="0 0 10 11" fill="none" stroke="#d2d4e2" stroke-width="1.3"><path d="M1 8.3 H9 C8.2 7.6 7.9 6.8 7.9 5.4 V4.4 C7.9 2.7 6.6 1.4 5 1.4 C3.4 1.4 2.1 2.7 2.1 4.4 V5.4 C2.1 6.8 1.8 7.6 1 8.3 Z"/><path d="M4 9.9 H6"/></svg>
<div class="b" style="left:637.00px;top:5.20px;width:11.40px;height:10.20px;background:#2c6be6;border-radius:5.1px;border:1px solid #21213b;"></div>
<div class="t" style="left:639.70px;top:8px;font-size:5.58px;line-height:6px;color:#fff;letter-spacing:-0.003px;font-weight:bold;">16</div>
<svg style="left:658.4px;top:9.8px" width="12" height="10.6" viewBox="0 0 12 11" fill="none" stroke="#d2d4e2" stroke-width="1.3"><path d="M0.8 0.8 H11.2 V8 H4.2 L0.8 10.6 Z" stroke-linejoin="round"/></svg>
<svg style="left:685.8px;top:8.7px" width="12" height="12" viewBox="0 0 11 11" fill="none" stroke="#d2d4e2" stroke-width="1.2"><circle cx="5.5" cy="5.5" r="4.8"/><path d="M4 4.4 C4 3.4 4.7 2.9 5.5 2.9 C6.3 2.9 7 3.4 7 4.2 C7 5.2 5.5 5.3 5.5 6.5 M5.5 7.5 V8.5" stroke-width="1"/></svg>
<svg style="left:709.60px;top:4.00px" width="21.80" height="21.80" viewBox="0 0 20 20"><defs><clipPath id="av4"><rect x="0" y="0" width="20" height="20" rx="2"/></clipPath></defs><g clip-path="url(#av4)"><rect width="20" height="20" fill="#8fa2b8"/><ellipse cx="10.1" cy="6.3" rx="5.4" ry="5.2" fill="#1d1b22"/><ellipse cx="9.9" cy="11" rx="4.3" ry="6" fill="#c59d8c"/><ellipse cx="10.4" cy="3.9" rx="4.7" ry="2.5" fill="#1d1b22"/><ellipse cx="12.7" cy="11" rx="1.7" ry="4.4" fill="#8d6657" opacity=".4"/><ellipse cx="9.9" cy="14.5" rx="3.2" ry="2.2" fill="#8d6657" opacity=".55"/><ellipse cx="8.2" cy="9.7" rx="1.1" ry=".55" fill="#3a2824" opacity=".8"/><ellipse cx="11.7" cy="9.7" rx="1.1" ry=".55" fill="#3a2824" opacity=".8"/><path d="M0 20 C1 17.4 5 16.4 7.6 17 L10 18.4 L12.4 17 C15 16.4 19 17.4 20 20 Z" fill="#6d7a8a"/><path d="M7.2 16.5 L10 19.6 L12.8 16.5 L12.4 20 H7.6 Z" fill="#eef0f2"/></g></svg>
</body></html>
